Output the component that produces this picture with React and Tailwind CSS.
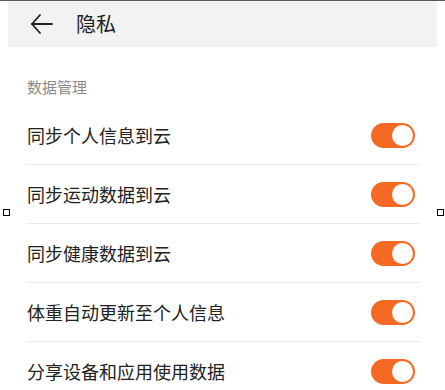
import React from "react";

const rows = [
  "同步个人信息到云",
  "同步运动数据到云",
  "同步健康数据到云",
  "体重自动更新至个人信息",
  "分享设备和应用使用数据",
];

function Toggle() {
  return (
    <div className="w-[44px] h-[25px] rounded-full bg-[#f46a25] flex items-center justify-end p-[2px]">
      <div className="w-[21px] h-[21px] rounded-full bg-white" />
    </div>
  );
}

export default function App() {
  return (
    <div
      className="relative w-[445px] h-[390px] bg-white overflow-hidden border-t border-[#5a5a5a]"
      style={{ fontFamily: '"Noto Sans CJK SC", "Noto Sans", sans-serif' }}
    >
      <div className="mx-2 h-[46px] bg-[#f2f2f2] flex items-center">
        <svg className="ml-[22px] w-[24px] h-[22px]" viewBox="0 0 24 22" fill="none" stroke="#222" strokeWidth="1.8" strokeLinecap="round" strokeLinejoin="round">
          <path d="M22 11H2" />
          <path d="M10 2L2 11L10 20" />
        </svg>
        <span className="ml-[22px] text-[20px] text-[#222] leading-none">隐私</span>
      </div>
      <div className="ml-[27px] mt-[30px] text-[15px] leading-[20px] text-[#8a8a8a]">数据管理</div>
      <div className="ml-[27px] mr-[25px] mt-[9px]">
        {rows.map((r) => (
          <div key={r} className="h-[59px] flex items-center justify-between border-b border-[#ebebeb] pr-[5px]">
            <span className="text-[18px] text-[#222]">{r}</span>
            <Toggle />
          </div>
        ))}
      </div>
      <div className="absolute left-[3px] top-[208px] w-[7px] h-[7px] border border-black bg-white" />
      <div className="absolute left-[437px] top-[208px] w-[7px] h-[7px] border border-black bg-white" />
    </div>
  );
}
